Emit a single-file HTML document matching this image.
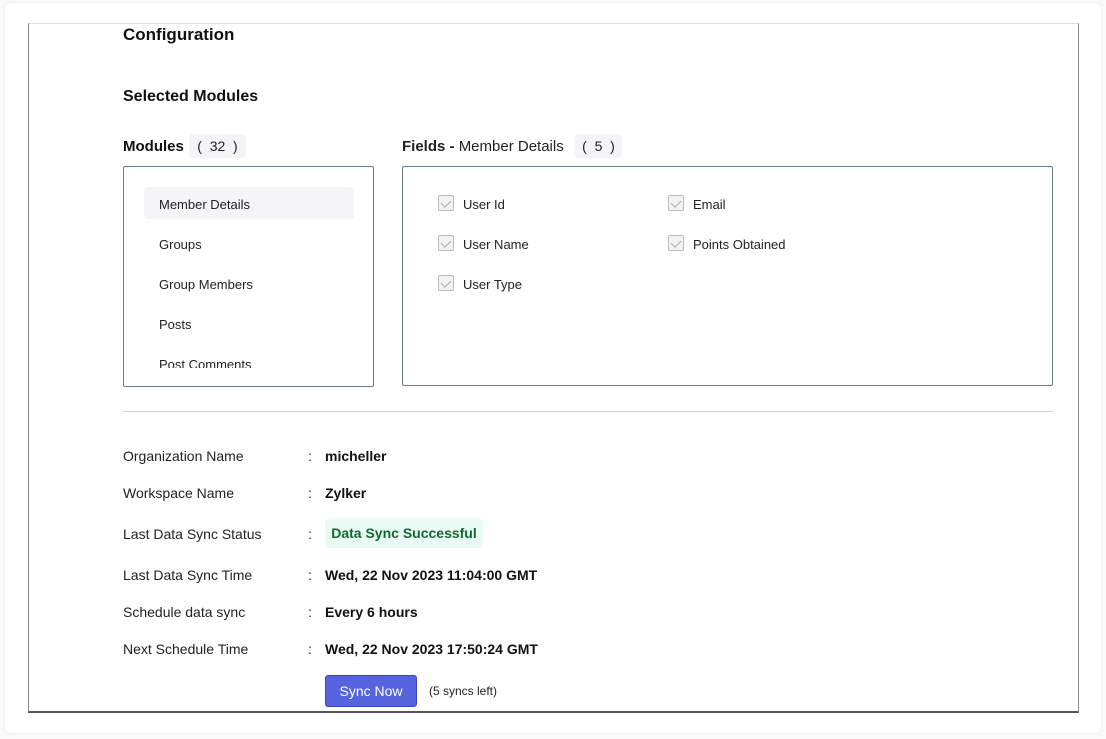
<!DOCTYPE html>
<html><head><style>
*{margin:0;padding:0;box-sizing:border-box}
body{width:1106px;height:739px;background:#fafafa;font-family:"Liberation Sans",sans-serif;color:#222;position:relative;overflow:hidden}
.outer{position:absolute;left:5px;top:3px;width:1096px;height:730px;background:#fff;border-radius:6px;box-shadow:0 0 3px rgba(0,0,0,.08)}
.card{position:absolute;left:28px;top:23px;width:1051px;height:690px;border:1px solid #888;border-top-color:#ddd;border-bottom:2px solid #555;background:#fff}
.a{position:absolute;white-space:nowrap}
.h{font-weight:bold;font-size:17px;color:#111}
.b{font-size:13px;color:#222}
.pill{position:absolute;background:#f4f4f8;border-radius:4px;font-size:14px;height:24px;line-height:24px;text-align:center}
.box{position:absolute;border:1px solid #6a7a8c;border-radius:2px}
.cb{position:absolute;width:16px;height:16px;border:1px solid #bbb;border-radius:2px;background:#f2f2f2}
.cb:after{content:"";position:absolute;left:4px;top:2px;width:5px;height:8px;border:solid #aaa;border-width:0 1.5px 1.5px 0;transform:rotate(45deg)}
.lbl{font-size:14px;color:#222}
.val{font-size:14px;font-weight:bold;color:#111}
</style></head><body>
<div class="outer"></div>
<div class="card"></div>
<div class="a h" style="left:123px;top:25px">Configuration</div>
<div class="a h" style="left:123px;top:88px;font-size:16px">Selected Modules</div>
<div class="a h" style="left:123px;top:138px;font-size:15px">Modules</div>
<div class="pill" style="left:189px;top:134px;width:57px">( &nbsp;32 &nbsp;)</div>
<div class="a" style="left:402px;top:138px;font-size:15px"><b>Fields - </b>Member Details</div>
<div class="pill" style="left:575px;top:134px;width:47px">( &nbsp;5 &nbsp;)</div>
<div class="box" style="left:123px;top:166px;width:251px;height:221px;">
 <div style="position:absolute;left:0;top:0;width:249px;height:201px;overflow:hidden">
 <div style="position:absolute;left:20px;top:20px;width:210px;height:32px;background:#f4f4f9;border-radius:4px"></div>
 <div class="a b" style="left:35px;top:30px">Member Details</div>
 <div class="a b" style="left:35px;top:70px">Groups</div>
 <div class="a b" style="left:35px;top:110px">Group Members</div>
 <div class="a b" style="left:35px;top:150px">Posts</div>
 <div class="a b" style="left:35px;top:190px">Post Comments</div>
 </div>
</div>
<div class="box" style="left:402px;top:166px;width:651px;height:220px"></div>
<div class="cb" style="left:438px;top:195px"></div><div class="a b" style="left:463px;top:197px">User Id</div>
<div class="cb" style="left:438px;top:235px"></div><div class="a b" style="left:463px;top:237px">User Name</div>
<div class="cb" style="left:438px;top:275px"></div><div class="a b" style="left:463px;top:277px">User Type</div>
<div class="cb" style="left:668px;top:195px"></div><div class="a b" style="left:693px;top:197px">Email</div>
<div class="cb" style="left:668px;top:235px"></div><div class="a b" style="left:693px;top:237px">Points Obtained</div>
<div class="a" style="left:123px;top:411px;width:930px;height:1px;background:#c8d4dc"></div>
<div class="a lbl" style="left:123px;top:448px">Organization Name</div><div class="a lbl" style="left:308px;top:448px">:</div><div class="a val" style="left:325px;top:448px">micheller</div>
<div class="a lbl" style="left:123px;top:485px">Workspace Name</div><div class="a lbl" style="left:308px;top:485px">:</div><div class="a val" style="left:325px;top:485px">Zylker</div>
<div class="a lbl" style="left:123px;top:526px">Last Data Sync Status</div><div class="a lbl" style="left:308px;top:526px">:</div>
<div class="a" style="left:325px;top:519px;width:158px;height:29px;background:#e9fbf3;border-radius:4px;color:#12692f;font-size:14px;font-weight:bold;line-height:29px;text-align:center">Data Sync Successful</div>
<div class="a lbl" style="left:123px;top:567px">Last Data Sync Time</div><div class="a lbl" style="left:308px;top:567px">:</div><div class="a val" style="left:325px;top:567px">Wed, 22 Nov 2023 11:04:00 GMT</div>
<div class="a lbl" style="left:123px;top:604px">Schedule data sync</div><div class="a lbl" style="left:308px;top:604px">:</div><div class="a val" style="left:325px;top:604px">Every 6 hours</div>
<div class="a lbl" style="left:123px;top:641px">Next Schedule Time</div><div class="a lbl" style="left:308px;top:641px">:</div><div class="a val" style="left:325px;top:641px">Wed, 22 Nov 2023 17:50:24 GMT</div>
<div class="a" style="left:325px;top:675px;width:92px;height:32px;background:#5563de;border:1px solid #3a45c0;border-radius:3px;color:#fff;font-size:14px;line-height:30px;text-align:center">Sync Now</div>
<div class="a" style="left:429px;top:684px;font-size:12px">(5 syncs left)</div>
</body></html>
